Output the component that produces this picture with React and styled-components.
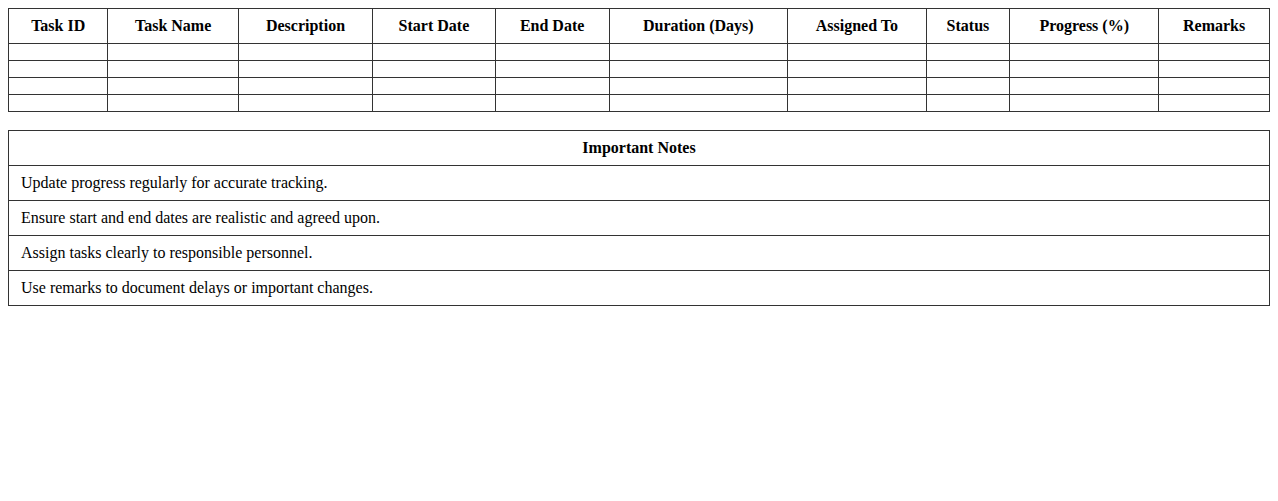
import React from "react";
import styled, { createGlobalStyle } from "styled-components";

const GlobalStyle = createGlobalStyle`
  body {
    margin: 8px;
    background: #fff;
    font-family: "Liberation Serif", "Times New Roman", serif;
    font-size: 16px;
    color: #000;
  }
`;

const Page = styled.div`
  display: flex;
  flex-direction: column;
  gap: 18px;
`;

const Table = styled.table`
  width: 100%;
  border-collapse: collapse;
`;

const HeadCell = styled.th`
  border: 1px solid #333;
  padding: 8px;
  font-weight: bold;
  text-align: center;
`;

const Cell = styled.td`
  border: 1px solid #333;
  padding: 8px;
`;

const NoteCell = styled.td`
  border: 1px solid #333;
  padding: 8px 12px;
  text-align: left;
`;

const columns = [
  "Task ID",
  "Task Name",
  "Description",
  "Start Date",
  "End Date",
  "Duration (Days)",
  "Assigned To",
  "Status",
  "Progress (%)",
  "Remarks",
];

const notes = [
  "Update progress regularly for accurate tracking.",
  "Ensure start and end dates are realistic and agreed upon.",
  "Assign tasks clearly to responsible personnel.",
  "Use remarks to document delays or important changes.",
];

export default () => {
  return (
    <Page>
      <GlobalStyle />
      <Table>
        <thead>
          <tr>
            {columns.map((c) => (
              <HeadCell key={c}>{c}</HeadCell>
            ))}
          </tr>
        </thead>
        <tbody>
          {[0, 1, 2, 3].map((r) => (
            <tr key={r}>
              {columns.map((c) => (
                <Cell key={c}></Cell>
              ))}
            </tr>
          ))}
        </tbody>
      </Table>
      <Table>
        <thead>
          <tr>
            <HeadCell>Important Notes</HeadCell>
          </tr>
        </thead>
        <tbody>
          {notes.map((n) => (
            <tr key={n}>
              <NoteCell>{n}</NoteCell>
            </tr>
          ))}
        </tbody>
      </Table>
    </Page>
  );
};
